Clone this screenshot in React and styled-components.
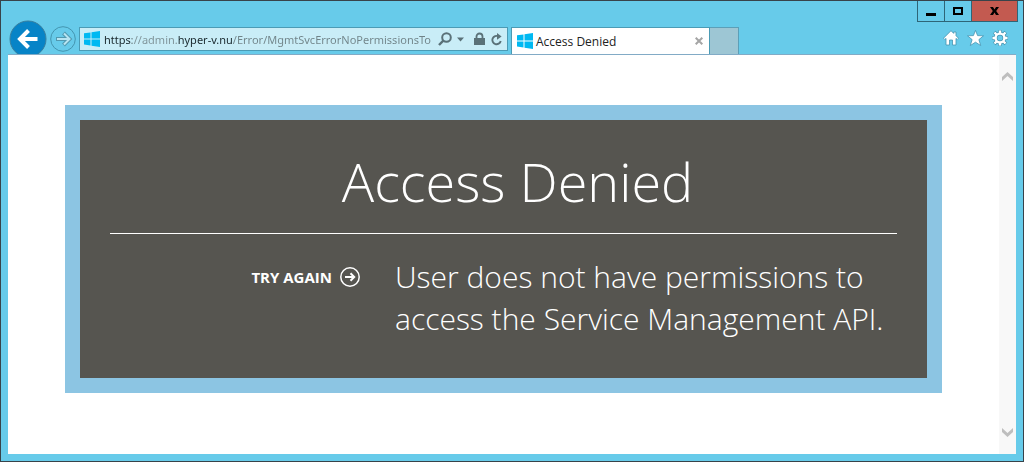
import React from "react";
import styled, { createGlobalStyle } from "styled-components";

const sans = '"Open Sans", "Noto Sans", sans-serif';

const GlobalStyle = createGlobalStyle`
  *, *::before, *::after { box-sizing: border-box; }
  body { margin: 0; font-family: ${sans}; }
  button, input { font: inherit; color: inherit; margin: 0; padding: 0; border: 0; background: none; }
  svg { display: block; flex: none; }
`;

const Window = styled.div`
  display: flex;
  flex-direction: column;
  min-height: 100vh;
  padding: 0 7px 7px;
  border: 1px solid #38434a;
  background: #67cbea;
`;

const TitleBar = styled.div`
  display: flex;
  justify-content: flex-end;
  height: 19px;
  margin-right: -2px;
`;

const CaptionButton = styled.button`
  display: flex;
  align-items: center;
  justify-content: center;
  width: ${(p) => (p.$close ? 47 : 27)}px;
  height: 21px;
  border: 1px solid #2e6577;
  border-top: 0;
  border-right-width: ${(p) => (p.$close ? 1 : 0)}px;
  background: ${(p) => (p.$close ? "#c35a50" : "transparent")};
`;

const NavBar = styled.div`
  display: flex;
  align-items: flex-start;
  height: 35px;
  overflow: hidden;
  border-bottom: 1px solid #82abc6;
`;

const BackButton = styled.button`
  flex: none;
  width: 38px;
  height: 38px;
  margin-left: 1px;
`;

const ForwardButton = styled.button`
  flex: none;
  width: 26px;
  height: 26px;
  margin: 6px 3px 0;
`;

const AddressBar = styled.div`
  display: flex;
  align-items: center;
  flex: 0 1 429px;
  min-width: 0;
  height: 24px;
  margin-top: 7px;
  padding: 0 4px;
  border: 1px solid #4b9bb5;
  background: #c9edf7;
`;

const AddressInput = styled.input`
  flex: 1;
  min-width: 0;
  height: 20px;
  margin-left: 4px;
  font-family: "Noto Sans", sans-serif;
  font-size: 11px;
  outline: 0;
  color: transparent;
  -webkit-text-fill-color: transparent;
  background: linear-gradient(
    90deg,
    #18272c 0 28px, #7d9196 28px 74px, #18272c 74px 128px, #708388 128px
  );
  -webkit-background-clip: text;
  background-clip: text;
`;

const AddressTools = styled.div`
  display: flex;
  align-items: center;
  gap: 4px;
  margin-left: 4px;
`;

const Tab = styled.div`
  display: flex;
  align-items: center;
  flex: 0 1 199px;
  min-width: 0;
  height: 27px;
  margin: 7px 0 0 3px;
  padding: 0 5px;
  border: 1px solid #4b9bb5;
  border-bottom: 0;
  background: #fff;
`;

const TabLabel = styled.button`
  display: flex;
  align-items: center;
  flex: 1;
  gap: 3px;
  font-size: 12px;
  white-space: nowrap;
  color: #222;
`;

const NewTab = styled.button`
  flex: none;
  width: 29px;
  height: 27px;
  margin-top: 7px;
  border: 1px solid #5b9fb8;
  border-width: 1px 1px 0 0;
  background: #9dc6d4;
`;

const Commands = styled.div`
  display: flex;
  gap: 8px;
  margin: 10px 8px 0 auto;
`;

const IconButton = styled.button`
  display: flex;
`;

const Viewport = styled.div`
  display: flex;
  flex: 1;
  background: #fff;
`;

const Page = styled.main`
  flex: 1;
  padding: 50px 57px;
`;

const ErrorCard = styled.section`
  padding: 30px 30px 38px;
  border: 15px solid #8cc5e3;
  background: #565550;
  color: #fff;
`;

const Title = styled.h1`
  margin: 0;
  padding: 0 0 20px 28px;
  border-bottom: 1px solid #fff;
  font-size: 54px;
  font-weight: 300;
  line-height: 63px;
  text-align: center;
`;

const Details = styled.div`
  display: grid;
  grid-template-columns: minmax(0, 250fr) minmax(0, 502fr);
  gap: 35px;
  padding-top: 22px;
`;

const RetryLink = styled.a`
  display: flex;
  align-items: center;
  justify-content: flex-end;
  gap: 8px;
  height: 42px;
  font-size: 15px;
  font-weight: 700;
  color: #fff;
  text-decoration: none;
`;

const Message = styled.p`
  margin: 0;
  font-size: 30px;
  font-weight: 300;
  line-height: 42px;
`;

const ScrollTrack = styled.div`
  display: flex;
  flex-direction: column;
  justify-content: space-between;
  flex: none;
  width: 17px;
  padding: 17px 3px;
  background: #f8f8f8;
`;

const WindowsLogo = () => (
  <svg width="16" height="16" viewBox="0 0 16 16" fill="#00b9f2" aria-hidden="true">
    <path d="M0 2.3 6.5 1.4V7.5H0zM7.5 1.2 16 0V7.5H7.5zM0 8.5H6.5V14.5L0 13.6zM7.5 8.5H16V16L7.5 14.7z" />
  </svg>
);

const Chevron = ({ down }) => (
  <svg width="11" height="9" viewBox="0 0 11 9" fill="#bebebe" aria-hidden="true">
    <path d={down ? "M0 0 5.5 5 11 0V4L5.5 9 0 4z" : "M0 9 5.5 4 11 9V5L5.5 0 0 5z"} />
  </svg>
);

export default function App() {
  return (
    <>
      <GlobalStyle />
      <Window>
        <TitleBar>
          <CaptionButton aria-label="Minimize">
            <svg width="10" height="11"><path d="M0 7H10V10H0z" /></svg>
          </CaptionButton>
          <CaptionButton aria-label="Maximize">
            <svg width="10" height="8"><path d="M1 1H9V7H1z" fill="none" stroke="#000" strokeWidth="2" /></svg>
          </CaptionButton>
          <CaptionButton $close aria-label="Close">
            <svg width="9" height="8" viewBox="0 0 9 8"><path d="M0 0H3L4.5 2.4 6 0H9L6.2 4 9 8H6L4.5 5.6 3 8H0L2.8 4z" /></svg>
          </CaptionButton>
        </TitleBar>
        <NavBar>
          <BackButton aria-label="Back">
            <svg width="38" height="38" viewBox="0 0 38 38" fill="none">
              <circle cx="19" cy="19" r="18" fill="#0784c7" stroke="#397f9e" />
              <path d="M28.5 19H11M19.5 10.5 11 19 19.5 27.5" stroke="#fff" strokeWidth="4" />
            </svg>
          </BackButton>
          <ForwardButton aria-label="Forward">
            <svg width="26" height="26" viewBox="0 0 26 26" fill="none">
              <circle cx="13" cy="13" r="12.3" stroke="#4495b0" />
              <path d="M6 13H19M13.5 7 19.5 13 13.5 19" stroke="#5199b0" strokeWidth="4" />
              <path d="M7 13H19M14 7.5 19.5 13 14 18.5" stroke="#b7e5f2" strokeWidth="2" />
            </svg>
          </ForwardButton>
          <AddressBar>
            <WindowsLogo />
            <AddressInput
              aria-label="Address"
              spellCheck={false}
              defaultValue="https://admin.hyper-v.nu/Error/MgmtSvcErrorNoPermissionsTo"
            />
            <AddressTools>
              <IconButton aria-label="Search">
                <svg width="14" height="14" viewBox="0 0 14 14" fill="none" stroke="#5a7178" strokeWidth="2">
                  <circle cx="8.5" cy="5.5" r="4.3" /><path d="M5.6 8.4 1 13" strokeWidth="2.4" />
                </svg>
              </IconButton>
              <IconButton aria-label="Address history">
                <svg width="9" height="5" viewBox="0 0 9 5" fill="#5a7178"><path d="M1 0.5H8L4.5 4.5z" /></svg>
              </IconButton>
              <IconButton aria-label="Security report">
                <svg width="18" height="14" viewBox="0 0 18 14">
                  <path d="M5 6H16V13H5z" fill="#5a7178" />
                  <path d="M7.5 7V4.5a3 3 0 0 1 6 0V7" fill="none" stroke="#5a7178" strokeWidth="1.8" />
                </svg>
              </IconButton>
              <IconButton aria-label="Refresh">
                <svg width="12" height="13" viewBox="0 0 12 13">
                  <path d="M7.5 3.3A4.2 4.2 0 1 0 9.7 8" fill="none" stroke="#5a7178" strokeWidth="1.9" />
                  <path d="M6 0 10.6 3.4 6 6.8z" fill="#5a7178" />
                </svg>
              </IconButton>
            </AddressTools>
          </AddressBar>
          <Tab>
            <TabLabel><WindowsLogo />Access Denied</TabLabel>
            <IconButton aria-label="Close tab">
              <svg width="9" height="8" viewBox="0 0 9 8" fill="none" stroke="#a5a5a5" strokeWidth="2"><path d="M0.7 0.7 7.3 7.3M7.3 0.7 0.7 7.3" /></svg>
            </IconButton>
          </Tab>
          <NewTab aria-label="New tab" />
          <Commands>
            <IconButton aria-label="Home">
              <svg width="16" height="16" viewBox="0 0 16 16" fill="#fff" stroke="#4594b1" strokeWidth="0.8">
                <path d="M8 0.7 0.5 8.2 1.8 9.5 3 8.4V15H6.5V10H9.5V15H13V8.4L14.2 9.5 15.5 8.2 13 5.7V2H10.7V3.4z" />
              </svg>
            </IconButton>
            <IconButton aria-label="Favorites">
              <svg width="17" height="16" viewBox="0 0 17 16" fill="#fff" stroke="#4594b1" strokeWidth="0.8">
                <path d="M8.5 0.4 10.6 5.6 16.5 5.8 11.9 9.6 13.7 15.5 8.5 12.2 3.3 15.5 5.1 9.6 0.5 5.8 6.4 5.6z" />
              </svg>
            </IconButton>
            <IconButton aria-label="Tools">
              <svg width="16" height="16" viewBox="0 0 16 16" fill="none">
                <g stroke="#4594b1" strokeWidth="3.8">
                  <path d="M8 0.2V3M8 13V15.8M0.2 8H3M13 8H15.8M2.2 2.2 4.5 4.5M11.5 11.5 13.8 13.8M2.2 13.8 4.5 11.5M11.5 4.5 13.8 2.2" />
                  <circle cx="8" cy="8" r="4.4" />
                </g>
                <g stroke="#fff" strokeWidth="2.4">
                  <path d="M8 0.5V3M8 13V15.5M0.5 8H3M13 8H15.5M2.5 2.5 4.5 4.5M11.5 11.5 13.5 13.5M2.5 13.5 4.5 11.5M11.5 4.5 13.5 2.5" />
                  <circle cx="8" cy="8" r="4.4" />
                </g>
              </svg>
            </IconButton>
          </Commands>
        </NavBar>
        <Viewport>
          <Page>
            <ErrorCard>
              <Title>Access Denied</Title>
              <Details>
                <RetryLink href="#">
                  TRY AGAIN
                  <svg width="20" height="20" viewBox="0 0 20 20" fill="none" stroke="#fff" strokeWidth="1.5" aria-hidden="true">
                    <circle cx="10" cy="10" r="9.2" />
                    <path d="M5 10H14M10.5 6.3 14.2 10 10.5 13.7" strokeWidth="2" />
                  </svg>
                </RetryLink>
                <Message>User does not have permissions to access the Service Management API.</Message>
              </Details>
            </ErrorCard>
          </Page>
          <ScrollTrack>
            <IconButton aria-label="Scroll up"><Chevron /></IconButton>
            <IconButton aria-label="Scroll down"><Chevron down /></IconButton>
          </ScrollTrack>
        </Viewport>
      </Window>
    </>
  );
}
